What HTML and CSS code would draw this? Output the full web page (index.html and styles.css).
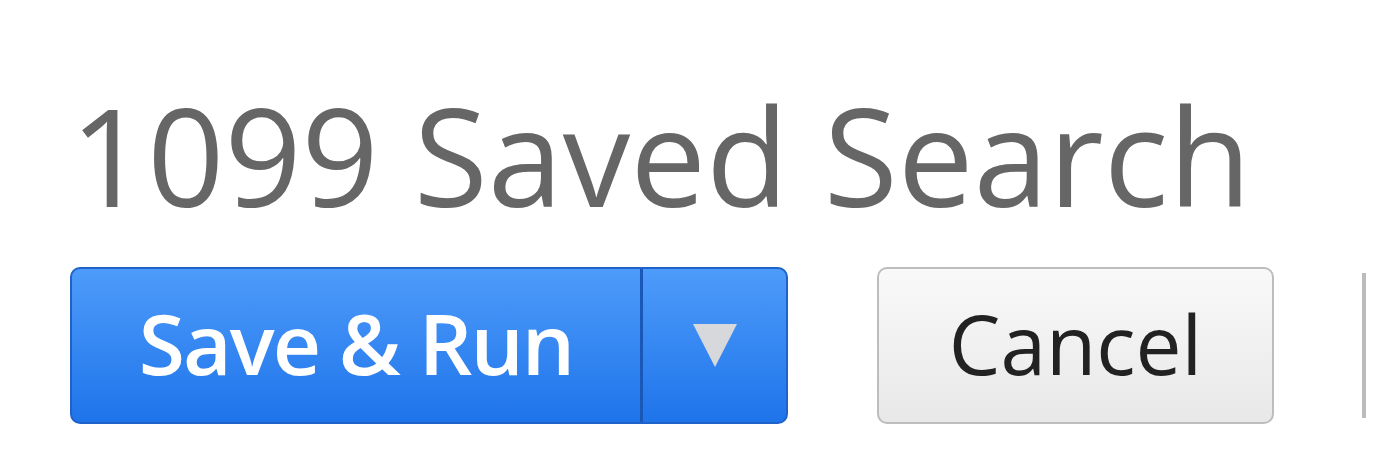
FILE: index.html
```html
<!DOCTYPE html>
<html lang="en">
<head>
    <meta charset="UTF-8">
    <title>1099 Saved Search</title>
    <link rel="stylesheet" href="styles.css">
</head>
<body>
    <div class="page">
        <h1 class="title">1099 Saved Search</h1>
        <div class="actions">
            <div class="split-btn">
                <button class="btn-main">Save &amp; Run</button>
                <button class="btn-menu"><span class="caret"></span></button>
            </div>
            <button class="btn-cancel">Cancel</button>
            <div class="divider"></div>
        </div>
    </div>
</body>
</html>
```

FILE: styles.css
```css
body {
    margin: 0;
    background: #ffffff;
    font-family: "Open Sans", Arial, sans-serif;
}
.page {
    padding: 80px 0 0 70px;
}
.title {
    margin: 0;
    font-size: 135px;
    font-weight: 400;
    line-height: 150px;
    color: #666666;
}
.actions {
    display: flex;
    align-items: center;
    margin-top: 37px;
}
.split-btn {
    display: flex;
    height: 157px;
    border: 2px solid #1f62c9;
    border-radius: 10px;
    overflow: hidden;
    box-sizing: border-box;
    background: linear-gradient(#4d9bfa, #1f74ea);
}
.split-btn button {
    border: none;
    background: transparent;
    font-family: inherit;
    color: #ffffff;
    cursor: pointer;
}
.btn-main {
    width: 571px;
    font-size: 84px;
    font-weight: 600;
    letter-spacing: -2px;
    padding: 0 0 6px 0;
    border-right: 3px solid #1a58b8 !important;
}
.btn-menu {
    width: 143px;
    display: flex;
    align-items: center;
    justify-content: center;
    padding: 0;
}
.caret {
    width: 0;
    height: 0;
    border-left: 22px solid transparent;
    border-right: 22px solid transparent;
    border-top: 43px solid #d6d8dc;
}
.btn-cancel {
    margin-left: 89px;
    width: 397px;
    height: 157px;
    box-sizing: border-box;
    border: 2px solid #bdbdbd;
    border-radius: 10px;
    background: linear-gradient(#f9f9f9, #e8e8e8);
    font-family: inherit;
    font-size: 82px;
    font-weight: 500;
    color: #222222;
    padding: 0 0 6px 0;
}
.divider {
    margin-left: 88px;
    width: 4px;
    height: 145px;
    background: #bbbbbb;
}
```
